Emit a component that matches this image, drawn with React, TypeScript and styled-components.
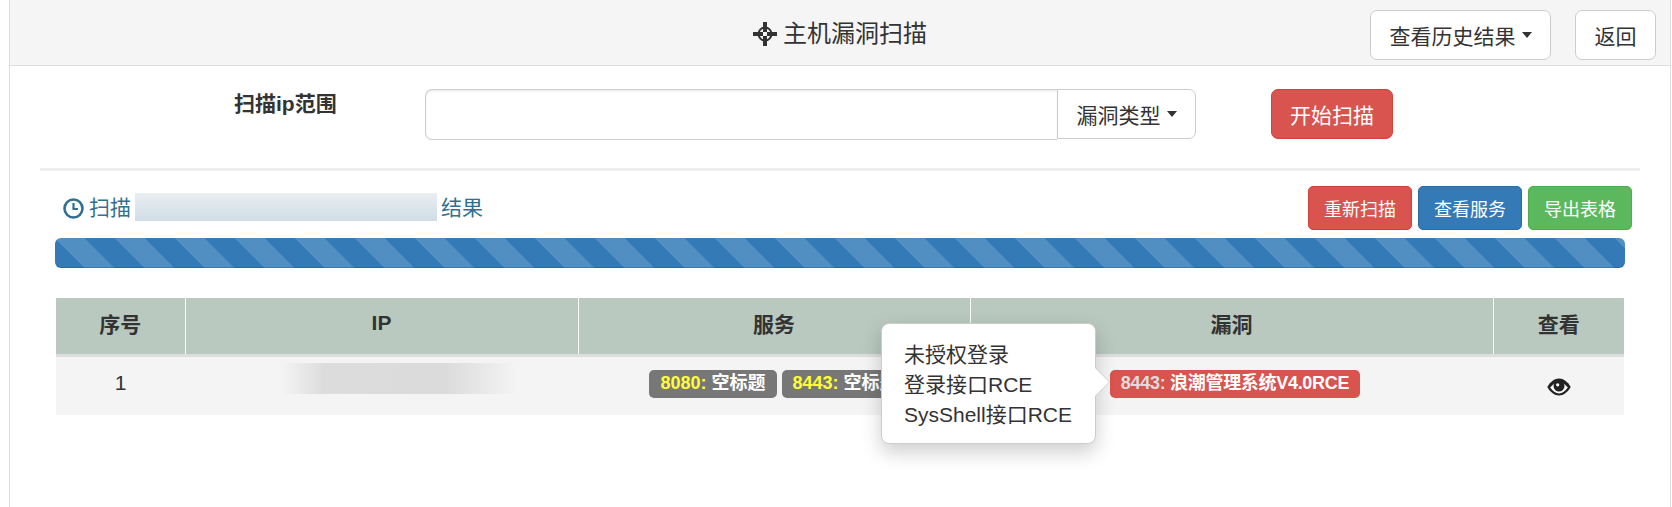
import React from "react";
import styled, { createGlobalStyle } from "styled-components";

const Global = createGlobalStyle`
  html, body { margin: 0; padding: 0; background: #fff; }
  body { font-family: "Liberation Sans", "Noto Sans CJK SC", sans-serif; color: #333; overflow: hidden; }
  * { box-sizing: border-box; }
`;

const Panel = styled.div`
  margin-left: 9px;
  width: 1662px;
  height: 507px;
  border-left: 1px solid #ddd;
  border-right: 1px solid #ddd;
  position: relative;
`;

const Header = styled.header`
  height: 66px;
  background: #f5f5f5;
  border-bottom: 1px solid #ddd;
  display: grid;
  grid-template-columns: 1fr auto 1fr;
  align-items: flex-start;
  padding: 10px 14px 0;
`;

const Title = styled.h3`
  grid-column: 2;
  margin: 9px 0 0;
  font-size: 24px;
  font-weight: 400;
  line-height: 30px;
  color: #333;
  display: flex;
  align-items: center;
  gap: 6px;
`;

const HeaderActions = styled.div`
  grid-column: 3;
  justify-self: end;
  display: flex;
  gap: 24px;
`;

const Button = styled.button<{ $tone?: "default" | "danger" | "primary" | "success"; $size?: "lg" | "sm" }>`
  font: inherit;
  font-size: ${(p) => (p.$size === "sm" ? "18px" : "21px")};
  height: ${(p) => (p.$size === "sm" ? "44px" : "50px")};
  width: ${(p) => (p.$size === "sm" ? "104px" : "auto")};
  padding: ${(p) => (p.$size === "sm" ? "0" : "0 18.5px")};
  border-radius: ${(p) => (p.$size === "sm" ? "5px" : "7px")};
  border: 1px solid
    ${(p) =>
      p.$tone === "danger" ? "#d43f3a" : p.$tone === "primary" ? "#2e6da4" : p.$tone === "success" ? "#4cae4c" : "#ccc"};
  background: ${(p) =>
    p.$tone === "danger" ? "#d9534f" : p.$tone === "primary" ? "#337ab7" : p.$tone === "success" ? "#5cb85c" : "#fff"};
  color: ${(p) => (p.$tone && p.$tone !== "default" ? "#fff" : "#333")};
  display: inline-flex;
  align-items: center;
  justify-content: center;
  gap: 6px;
  white-space: nowrap;
`;

const Caret = styled.span`
  display: inline-block;
  width: 0;
  height: 0;
  border-top: 6px solid #333;
  border-left: 5.5px solid transparent;
  border-right: 5.5px solid transparent;
`;

const FormRow = styled.div`
  display: flex;
  align-items: flex-start;
  padding: 23px 0 0 224px;
`;

const FormLabel = styled.label`
  width: 191px;
  font-size: 21px;
  font-weight: 700;
  line-height: 30px;
`;

const InputGroup = styled.div`
  display: flex;
  width: 771px;
`;

const TextInput = styled.input`
  flex: 1;
  min-width: 0;
  height: 51px;
  border: 1px solid #ccc;
  border-right: 0;
  border-radius: 7px 0 0 7px;
  box-shadow: inset 0 1.5px 1.5px rgba(0, 0, 0, 0.075);
  outline: none;
`;

const AddonButton = styled(Button)`
  width: 139px;
  padding: 0;
  border-radius: 0 7px 7px 0;
`;

const StartButton = styled(Button)`
  width: 122px;
  padding: 0;
  margin-left: 75px;
`;

const Rule = styled.hr`
  margin: 28px 0 0 30px;
  width: 1600px;
  height: 3px;
  border: 0;
  background: #eee;
`;

const ResultRow = styled.div`
  display: flex;
  justify-content: space-between;
  align-items: flex-start;
  padding: 15px 38px 0 53px;
`;

const ResultTitle = styled.div`
  display: flex;
  align-items: center;
  height: 30px;
  margin-top: 7px;
  font-size: 21px;
  line-height: 30px;
  color: #31708f;
`;

const TitleIconSlot = styled.span`
  display: flex;
  margin-right: 5px;
`;

const BlurRange = styled.span`
  width: 302px;
  height: 28px;
  margin: 0 4px 2px 4px;
  background: linear-gradient(180deg, #e9eef1 0%, #d0dde7 100%);
`;

const ActionGroup = styled.div`
  display: flex;
  gap: 6px;
`;

const Progress = styled.div`
  margin: 8px 0 0 45px;
  width: 1570px;
  height: 30px;
  border-radius: 6px;
  background-color: #337ab7;
  background-image: linear-gradient(
    45deg,
    rgba(255, 255, 255, 0.15) 25%,
    transparent 25%,
    transparent 50%,
    rgba(255, 255, 255, 0.15) 50%,
    rgba(255, 255, 255, 0.15) 75%,
    transparent 75%,
    transparent
  );
  background-size: 60px 60px;
  box-shadow: inset 0 -1px 0 rgba(0, 0, 0, 0.15);
`;

const Table = styled.table`
  margin: 30px 0 0 46px;
  width: 1568px;
  border-collapse: collapse;
  table-layout: fixed;
`;

const HeadCell = styled.th<{ $w: number }>`
  width: ${(p) => p.$w}px;
  height: 57px;
  padding: 0 0 5px;
  background: #b9c9bf;
  border-bottom: 3px solid #ddd;
  border-left: 1px solid #fff;
  font-size: 21px;
  font-weight: 700;
  color: #333;
  text-align: center;
  &:first-child { border-left: 0; }
`;

const Row = styled.tr`
  background: #f4f4f4;
  height: 60px;
`;

const Cell = styled.td`
  padding: 11px 0 0;
  vertical-align: top;
  text-align: center;
  font-size: 21px;
  line-height: 30px;
  height: 60px;
`;

const IpBlur = styled.div`
  width: 231px;
  height: 31px;
  margin: -5px 0 0 98px;
  background: linear-gradient(90deg, #f3f3f3 0%, #dcdcdc 18%, #dbdbdb 70%, #f3f3f3 100%);
`;

const LabelList = styled.div<{ $shift: number }>`
  display: flex;
  justify-content: center;
  gap: 5px;
  margin-top: 2px;
  padding-left: ${(p) => p.$shift}px;
`;

const Tag = styled.span<{ $tone: "gray" | "red" }>`
  display: inline-block;
  height: 28px;
  padding: 0 11px;
  line-height: 27px;
  font-size: 18px;
  font-weight: 700;
  color: #fff;
  border-radius: 5px;
  white-space: nowrap;
  letter-spacing: ${(p) => (p.$tone === "red" ? "-0.3px" : "0")};
  background: ${(p) => (p.$tone === "red" ? "#d9534f" : "#777")};
`;

const Port = styled.span<{ $color: string }>`
  color: ${(p) => p.$color};
`;

const EyeSlot = styled.div`
  display: flex;
  justify-content: center;
  margin-top: 10px;
`;

const Popover = styled.div`
  position: absolute;
  left: 871px;
  top: 323px;
  width: 215px;
  height: 121px;
  padding: 16px 0 0 22px;
  background: #fff;
  border: 1px solid #ccc;
  border-radius: 8px;
  box-shadow: 0 8px 20px rgba(0, 0, 0, 0.2);
  font-size: 21px;
  line-height: 30px;
  color: #333;
  white-space: nowrap;
  &::before {
    content: "";
    position: absolute;
    top: 43px;
    right: -15px;
    border-left: 15px solid #ccc;
    border-top: 15px solid transparent;
    border-bottom: 15px solid transparent;
  }
  &::after {
    content: "";
    position: absolute;
    top: 44px;
    right: -14px;
    border-left: 14px solid #fff;
    border-top: 14px solid transparent;
    border-bottom: 14px solid transparent;
  }
`;

const columns: [string, number][] = [
  ["序号", 129],
  ["IP", 393],
  ["服务", 392],
  ["漏洞", 523],
  ["查看", 131],
];

const ScreenshotIcon = () => (
  <svg width="24" height="24" viewBox="0 0 24 24" fill="none" stroke="#333">
    <circle cx="12" cy="12" r="6.5" strokeWidth="2" />
    <path d="M12 0v10M12 14v10M0 12h10M14 12h10" strokeWidth="4" />
  </svg>
);

const ClockIcon = () => (
  <svg width="21" height="21" viewBox="0 0 21 21" fill="none" stroke="#31708f">
    <circle cx="10.500" cy="10.500" r="9" strokeWidth="2.600" />
    <path d="M10.500 5v6H15" strokeWidth="2.200" />
  </svg>
);

const EyeIcon = () => (
  <svg width="24" height="18" viewBox="0 0 24 18">
    <path fill="#222" d="M.3 9C3.500 3.500 7.500.5 12 .5S20.500 3.500 23.700 9C20.500 14.500 16.500 17.500 12 17.500S3.500 14.500.3 9z" />
    <path fill="#fff" d="M3.200 9.500C5 7.500 6 6.500 7.500 5.500h9c1.500 1 2.500 2 4.300 4C18 13 15.500 15.500 12 15.500S6 13 3.200 9.500z" />
    <circle cx="12" cy="8" r="5.500" fill="#222" />
    <circle cx="10.700" cy="6.800" r="1.600" fill="#fff" />
  </svg>
);

export default function App() {
  return (
    <>
      <Global />
      <Panel>
        <Header>
          <Title>
            <ScreenshotIcon />
            主机漏洞扫描
          </Title>
          <HeaderActions>
            <Button>
              查看历史结果
              <Caret />
            </Button>
            <Button>返回</Button>
          </HeaderActions>
        </Header>

        <FormRow>
          <FormLabel>扫描ip范围</FormLabel>
          <InputGroup>
            <TextInput type="text" />
            <AddonButton>
              漏洞类型
              <Caret />
            </AddonButton>
          </InputGroup>
          <StartButton $tone="danger">开始扫描</StartButton>
        </FormRow>

        <Rule />

        <ResultRow>
          <ResultTitle>
            <TitleIconSlot>
              <ClockIcon />
            </TitleIconSlot>
            扫描
            <BlurRange />
            结果
          </ResultTitle>
          <ActionGroup>
            <Button $size="sm" $tone="danger">重新扫描</Button>
            <Button $size="sm" $tone="primary">查看服务</Button>
            <Button $size="sm" $tone="success">导出表格</Button>
          </ActionGroup>
        </ResultRow>

        <Progress />

        <Table>
          <thead>
            <tr>
              {columns.map(([name, w]) => (
                <HeadCell key={name} $w={w}>{name}</HeadCell>
              ))}
            </tr>
          </thead>
          <tbody>
            <Row>
              <Cell>1</Cell>
              <Cell>
                <IpBlur />
              </Cell>
              <Cell>
                <LabelList $shift={10}>
                  <Tag $tone="gray"><Port $color="#ffff33">8080:</Port> 空标题</Tag>
                  <Tag $tone="gray"><Port $color="#ffff33">8443:</Port> 空标题</Tag>
                </LabelList>
              </Cell>
              <Cell>
                <LabelList $shift={7}>
                  <Tag $tone="red"><Port $color="#dddddd">8443:</Port> 浪潮管理系统V4.0RCE</Tag>
                </LabelList>
              </Cell>
              <Cell>
                <EyeSlot>
                  <EyeIcon />
                </EyeSlot>
              </Cell>
            </Row>
          </tbody>
        </Table>

        <Popover>
          未授权登录
          <br />
          登录接口RCE
          <br />
          SysShell接口RCE
        </Popover>
      </Panel>
    </>
  );
}
